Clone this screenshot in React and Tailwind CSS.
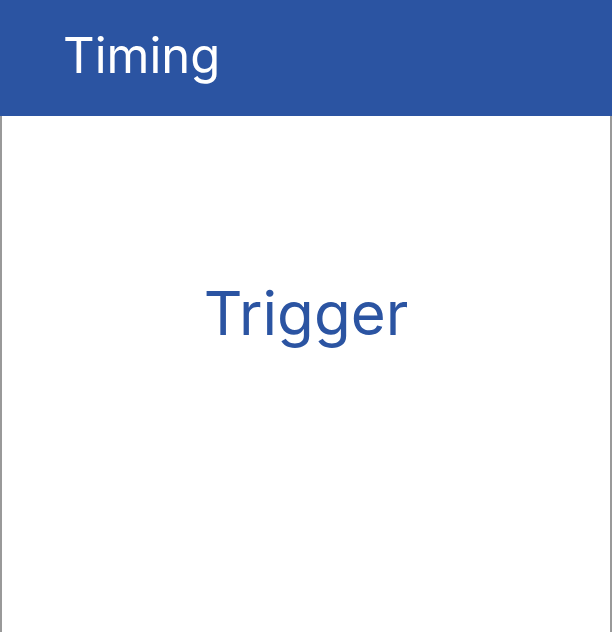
export default function App() {
  return (
    <div className="w-[612px] h-[632px] flex flex-col bg-white" style={{ fontFamily: 'Inter, "Noto Sans", sans-serif' }}>
      <div className="h-[116px] shrink-0 bg-[#2b54a2] flex items-center pl-[63px] pb-[6px]">
        <h1 className="text-[49px] font-normal text-white leading-none">Timing</h1>
      </div>
      <div className="flex-1 border-x-2 border-[#999999] flex items-start justify-center pt-[167px]">
        <span className="text-[60px] text-[#2b54a2] leading-none">Trigger</span>
      </div>
    </div>
  );
}
